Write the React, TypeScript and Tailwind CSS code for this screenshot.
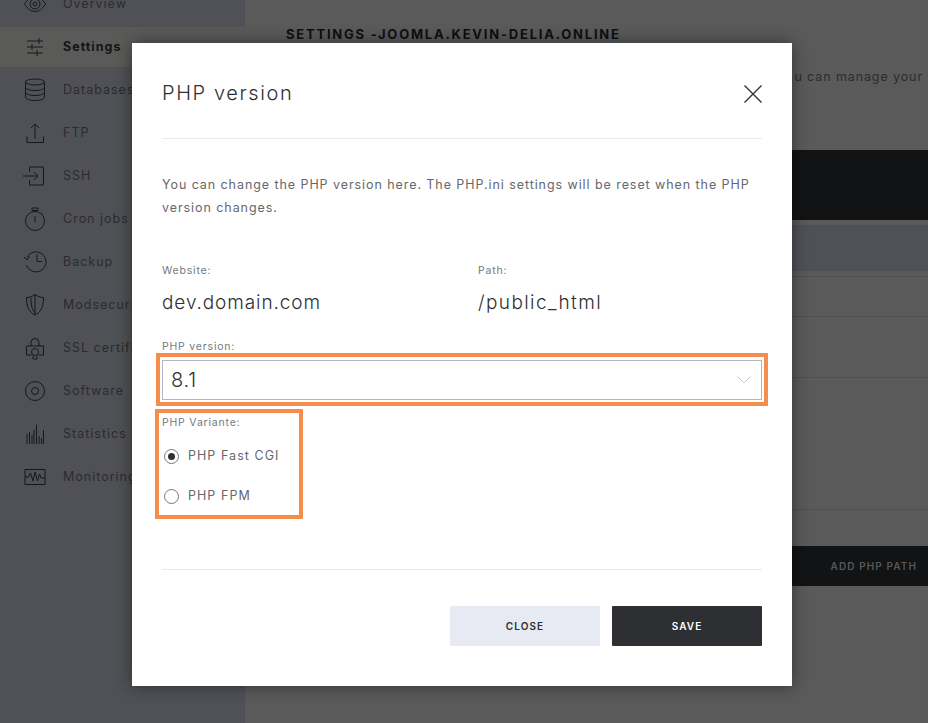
const font = "font-['Inter','Liberation_Sans',sans-serif]";

function Icon({ children }: { children: React.ReactNode }) {
  return (
    <svg width="24" height="24" viewBox="0 0 24 24" fill="none" stroke="#17181a" strokeWidth="1" className="shrink-0">
      {children}
    </svg>
  );
}

const items: { label: string; active?: boolean; icon: React.ReactNode }[] = [
  {
    label: "Overview",
    icon: (
      <>
        <path d="M1.500 12C5 6.500 8.500 4.500 12 4.500S19 6.500 22.500 12C19 17.500 15.500 19.500 12 19.500S5 17.500 1.500 12Z" />
        <circle cx="12" cy="12" r="5" />
        <circle cx="12" cy="12" r="2" />
      </>
    ),
  },
  {
    label: "Settings",
    active: true,
    icon: (
      <path d="M4 6H20M4 12H20M4 18H20M16 3V9M9 9V15M14 15V21" />
    ),
  },
  {
    label: "Databases",
    icon: (
      <>
        <ellipse cx="12" cy="4" rx="9.500" ry="3" />
        <path d="M2.500 4V19C2.500 21 6.500 22.500 12 22.500S21.500 21 21.500 19V4" />
        <path d="M2.500 9C2.500 11 6.500 12.500 12 12.500S21.500 11 21.500 9M2.500 14C2.500 16 6.500 17.500 12 17.500S21.500 16 21.500 14" />
      </>
    ),
  },
  {
    label: "FTP",
    icon: <path d="M4 15.500V21.500H20.500V15.500M12 18V3M8 7L12 3L16 7" />,
  },
  {
    label: "SSH",
    icon: <path d="M6.500 8V3H20.500V21H6.500V16M0 12H14.500M11 8L15 12L11 16" />,
  },
  {
    label: "Cron jobs",
    icon: (
      <>
        <circle cx="12" cy="14" r="9.500" />
        <path d="M9 1H15V3.500H9ZM12 3.500V4.500M12 9V15.500M19 5.500L20 6.500" />
      </>
    ),
  },
  {
    label: "Backup",
    icon: (
      <path d="M4 7.500A10 10 0 1 1 3.500 15M1 7L4 10L6.500 6.500M14 4.500V11.500H19" />
    ),
  },
  {
    label: "Modsecurity",
    icon: (
      <path d="M12 1.500C9.500 3.500 6.500 4.500 3.500 4.500C3.500 13 5.500 19 12 22C18.500 19 20.500 13 20.500 4.500C17.500 4.500 14.500 3.500 12 1.500ZM12 1.500V22M8 5C8 12 9 16.500 12 20" />
    ),
  },
  {
    label: "SSL certificates",
    icon: (
      <>
        <path d="M8 10V6.500A4 4 0 0 1 16 6.500V10M8.500 19H3.500V10H20.500V19H15.500" />
        <circle cx="12" cy="16" r="3.500" />
        <path d="M10 19.500V23H14V19.500" />
      </>
    ),
  },
  {
    label: "Software",
    icon: (
      <>
        <circle cx="12" cy="12" r="9.500" />
        <circle cx="12" cy="12" r="3.500" />
      </>
    ),
  },
  {
    label: "Statistics",
    icon: (
      <path d="M4 22V12M6.500 22V10M9 22V13M11 22V8M13.500 22V2.500M16 22V14M18.500 22V16M20.500 22V8" />
    ),
  },
  {
    label: "Monitoring",
    icon: (
      <>
        <path d="M2 4.500H22V19.500H2Z" />
        <path d="M2 12H5.500L7.500 8L10 16L12 7L14.500 16L16.500 9L18 13H22" />
      </>
    ),
  },
];

function Sidebar() {
  return (
    <aside className="w-[245px] shrink-0 bg-[#505156]">
      <div className="-mt-[16px] flex flex-col gap-[3px]">
        {items.map((item) => (
          <div
            key={item.label}
            className={`flex h-10 items-center gap-[16px] pl-[23px] ${item.active ? "bg-[#5a5a59]" : ""}`}
          >
            <Icon>{item.icon}</Icon>
            <span
              className={`whitespace-nowrap text-[12.500px] tracking-[1px] ${item.active ? "font-bold text-[#141517]" : "text-[#2b2c2f]"}`}
            >
              {item.label}
            </span>
          </div>
        ))}
      </div>
    </aside>
  );
}

function Main() {
  return (
    <main className="flex-1 bg-[#5a5a5a] pt-[27px]">
      <h1 className="pl-[41px] text-[13px] font-bold leading-[14px] tracking-[1.780px] text-[#0e0f10]">
        SETTINGS -JOOMLA.KEVIN-DELIA.ONLINE
      </h1>
      <p className="mt-[29px] pr-[5px] text-right text-[12.500px] leading-[14px] tracking-[0.900px] text-[#2b2c2f]">
        u can manage your
      </p>
      <div className="mt-[66px] h-[70px] bg-[#121314]" />
      <div className="mt-[5px] h-[46px] bg-[#505156]" />
      <div className="mt-[5px] h-[41px] border-y border-[#505052]" />
      <div className="h-[61px] border-b border-[#505052]" />
      <div className="h-[132px] border-b border-[#505052]" />
      <div className="mt-[36px] flex h-[40px] items-center justify-end bg-[#121314] pr-[11px] text-[10px] font-semibold tracking-[1.100px] text-[#56575a]">
        ADD PHP PATH
      </div>
    </main>
  );
}

function Modal() {
  return (
    <div className="absolute left-[132px] top-[43px] flex h-[643px] w-[660px] flex-col bg-white px-[30px] shadow-[0_0_16px_rgba(0,0,0,0.45)]">
      <div className="flex h-[96px] items-center justify-between border-b border-[#e9e8f3] pt-[5px]">
        <h2 className="text-[20px] font-light tracking-[1.600px] text-[#2e2f33]">PHP version</h2>
        <svg width="18" height="18" viewBox="0 0 18 18" stroke="#2e2f33" strokeWidth="1.300" fill="none" className="mt-[1px]">
          <path d="M0.500 0.500L17.500 17.500M17.500 0.500L0.500 17.500" />
        </svg>
      </div>
      <p className="mt-[34px] text-[12.500px] leading-[23px] tracking-[0.930px] text-[#66676b]">
        You can change the PHP version here. The PHP.ini settings will be reset when the PHP version changes.
      </p>
      <div className="mt-[45px] flex">
        <div className="w-[316px]">
          <div className="text-[10.500px] leading-[14px] tracking-[0.800px] text-[#77787c]">Website:</div>
          <div className="mt-[13px] text-[19px] font-light leading-[24px] tracking-[0.900px] text-[#2e2f33]">dev.domain.com</div>
        </div>
        <div>
          <div className="text-[10.500px] leading-[14px] tracking-[0.800px] text-[#77787c]">Path:</div>
          <div className="mt-[13px] text-[19px] font-light leading-[24px] tracking-[1.400px] text-[#2e2f33]">/public_html</div>
        </div>
      </div>
      <div className="mt-[26px] text-[10.500px] leading-[12px] tracking-[0.800px] text-[#77787c]">PHP version:</div>
      <div className="relative mt-[7px] flex h-[40px] items-center justify-between border border-[#b3b5c4] pl-[8px] pr-[10px] text-[20px] font-light tracking-[0.800px] text-[#2e2f33]">
        8.1
        <svg width="14" height="8" viewBox="0 0 14 8" fill="none" stroke="#c9cacf">
          <path d="M0.500 0.500L7 7L13.500 0.500" />
        </svg>
        <div className="absolute -left-[7px] -right-[7px] -top-[8px] -bottom-[7px] border-4 border-[#f58d4d]" />
      </div>
      <div className="relative mt-[16px] w-[140px]">
        <div className="text-[10.500px] leading-[14px] tracking-[0.800px] text-[#77787c]">PHP Variante:</div>
        <label className="ml-[2px] mt-[16px] flex h-[20px] items-center gap-[9px] text-[12.500px] tracking-[1.050px] text-[#66676b]">
          <span className="flex h-[15px] w-[15px] items-center justify-center rounded-full border border-[#77787c]">
            <span className="h-[7px] w-[7px] rounded-full bg-[#2e2f33]" />
          </span>
          PHP Fast CGI
        </label>
        <label className="ml-[2px] mt-[20px] flex h-[20px] items-center gap-[9px] text-[12.500px] tracking-[1.050px] text-[#66676b]">
          <span className="h-[15px] w-[15px] rounded-full border border-[#77787c]" />
          PHP FPM
        </label>
        <div className="absolute -left-[7px] -top-[7px] h-[110px] w-[148px] border-4 border-[#f58d4d]" />
      </div>
      <div className="mt-auto mb-[116px] border-b border-[#e9e8f3]" />
      <div className="absolute bottom-[40px] right-[30px] flex gap-[12px] text-[10px] font-semibold tracking-[1.100px]">
        <button className="h-[40px] w-[150px] rounded-[1px] bg-[#e7e9f3] text-[#2e2f33]">CLOSE</button>
        <button className="h-[40px] w-[150px] rounded-[1px] bg-[#2e2f33] text-white">SAVE</button>
      </div>
    </div>
  );
}

export default function App() {
  return (
    <div className={`relative flex h-[723px] w-[928px] overflow-hidden ${font}`}>
      <Sidebar />
      <Main />
      <Modal />
    </div>
  );
}
